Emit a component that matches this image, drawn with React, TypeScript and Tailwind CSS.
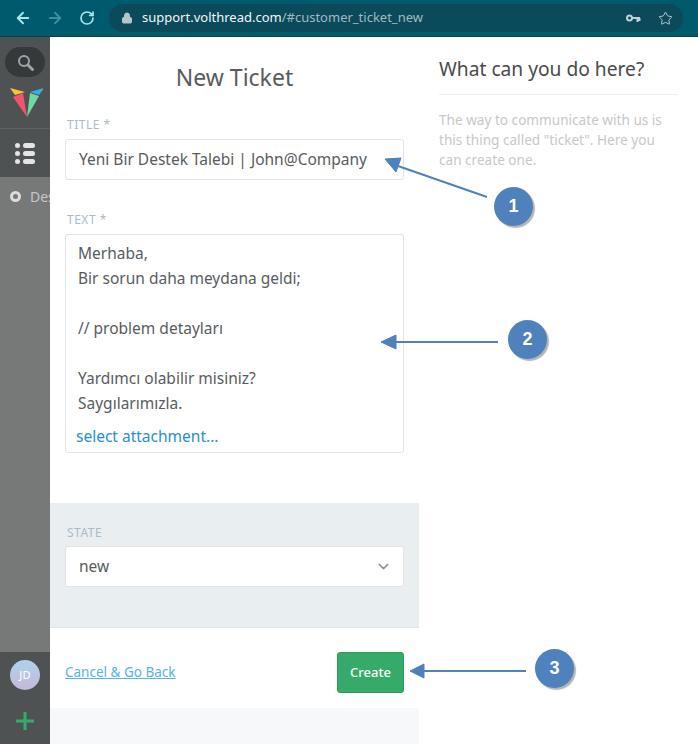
import React from 'react';
import { ArrowLeft, ArrowRight, RotateCw, Lock, Star, ChevronDown } from 'lucide-react';

const textLines = ['Merhaba,', 'Bir sorun daha meydana geldi;', '', '// problem detayları', '', 'Yardımcı olabilir misiniz?', 'Saygılarımızla.'];

const Sidebar = () => (
    <aside className="w-[50px] shrink-0 flex flex-col bg-[#4f5253]">
        <div className="h-[92px] flex flex-col items-center border-b border-[#5f6262]">
            <div className="mt-[10px] w-10 h-[30px] rounded-full bg-[#35393b] flex items-center justify-center">
                <svg width="17" height="17" viewBox="0 0 17 17" fill="none" stroke="#a0a3a4">
                    <circle cx="7" cy="7" r="5" strokeWidth="2" />
                    <path d="M11 11 L15.5 15.5" strokeWidth="3" strokeLinecap="round" />
                </svg>
            </div>
            <svg width="36" height="32" viewBox="0 0 36 32" className="mt-[10px]">
                <path d="M3 1 L18 5 L8 8 Z" fill="#f9c23c" />
                <path d="M37 1 L23 5 L32 8 Z" fill="#36b0e3" />
                <path d="M6 10 L16 6 L20 30 Z" fill="#f4536f" />
                <path d="M32 9 L23 6 L20 30 Z" fill="#6fd8a4" />
            </svg>
        </div>
        <div className="h-[48px] flex flex-col justify-center items-center gap-[3px]">
            {[0, 1, 2].map(i => (
                <div key={i} className="flex items-center gap-[3px]">
                    <span className="w-[5px] h-[5px] rounded-full bg-[#e4e4e4]" />
                    <span className="w-[12px] h-[5px] rounded-full bg-[#e4e4e4]" />
                </div>
            ))}
        </div>
        <div className="flex-1 bg-[#777878] overflow-hidden">
            <div className="flex items-center h-[38px] pl-[10px] gap-[9px] text-[#c6c7c7] text-[14px] whitespace-nowrap">
                <span className="w-[11px] h-[11px] shrink-0 rounded-full border-[3px] border-[#dcdcdc]" />
                Destek
            </div>
        </div>
        <div className="h-[92px] flex flex-col items-center">
            <div className="mt-2 w-[30px] h-[30px] rounded-full bg-gradient-to-b from-[#aed2ea] to-[#c4b9d8] flex items-center justify-center text-white text-[11px] tracking-wide">
                JD
            </div>
            <svg width="18" height="18" viewBox="0 0 18 18" className="mt-[22px]">
                <path d="M9 0 V18 M0 9 H18" stroke="#35ad68" strokeWidth="3" />
            </svg>
        </div>
    </aside>
);

const Field = ({ label, gap = 'mb-[6px]', children }: { label: string; gap?: string; children: React.ReactNode }) => (
    <div>
        <div className={`text-[12px] leading-[16px] tracking-[0.5px] pl-[2px] text-[#a9bcc8] ${gap}`}>{label}</div>
        {children}
    </div>
);

const Callout = ({ n, className }: { n: number; className: string }) => (
    <div className={`absolute w-[39px] h-[39px] rounded-full bg-[#4f81bd] text-white font-bold text-[18px] flex items-center justify-center shadow-[2px_2px_1px_#b5b5b5] font-['Liberation_Sans',sans-serif] ${className}`}>
        {n}
    </div>
);

export default function App() {
    return (
        <div className="relative w-[698px] h-[744px] overflow-hidden bg-white font-['Noto_Sans',sans-serif] text-[#585c5e]">
            <header className="h-[37px] bg-[#005a6e] border-b border-[#0b3f4d] flex items-center pl-[14px] pr-[15px]">
                <ArrowLeft size={18} strokeWidth={2.5} className="text-[#a6e8ea]" />
                <ArrowRight size={18} strokeWidth={2.5} className="text-[#3c8f9c] ml-[14px]" />
                <RotateCw size={16} strokeWidth={2.5} className="text-[#a6e8ea] ml-[15px]" />
                <div className="ml-[14px] flex-1 h-[28px] rounded-full bg-[#0b4a5a] flex items-center pl-[12px] pr-[10px]">
                    <Lock size={12} className="text-[#b4c6cb]" fill="#b4c6cb" />
                    <span className="ml-[9px] text-[13px] text-[#f2f7f8]">support.volthread.com<span className="text-[#9fbac1]">/#customer_ticket_new</span></span>
                    <div className="flex-1" />
                    <svg width="15" height="9" viewBox="0 0 15 9" fill="none" stroke="#c2d0d4">
                        <circle cx="3.5" cy="4" r="2.5" strokeWidth="2" />
                        <path d="M6 4 H14 M11.5 4 V8 M13.5 4 V7" strokeWidth="2" />
                    </svg>
                    <Star size={15} strokeWidth={1.5} className="text-[#c2d0d4] ml-[17px]" />
                </div>
            </header>

            <div className="flex h-[707px]">
                <Sidebar />
                <main className="w-[369px] shrink-0 flex flex-col">
                    <div className="h-[466px] px-[15px]">
                        <h1 className="mt-[24px] mb-[24px] text-[23px] leading-[32px] text-center">New Ticket</h1>
                        <Field label="TITLE *">
                            <div className="h-[41px] rounded-[3px] border border-[#e3e3e3] px-[13px] flex items-center text-[15.5px] whitespace-nowrap">
                                Yeni Bir Destek Talebi | John@Company
                            </div>
                        </Field>
                        <div className="h-[32px]" />
                        <Field label="TEXT *">
                            <div className="h-[219px] rounded-[3px] border border-[#e3e3e3] pl-[12px] pr-[10px] pt-[6px] text-[15.5px] leading-[25px] flex flex-col">
                                {textLines.map((line, i) => (
                                    <div key={i} className="h-[25px]">{line}</div>
                                ))}
                                <div className="mt-[8px] -ml-[2px] text-[#2a8fd0]">select attachment...</div>
                            </div>
                        </Field>
                    </div>
                    <div className="h-[125px] bg-[#e9eef1] px-[15px] pt-[22px] border-b border-[#dfe4e6]">
                        <Field label="STATE" gap="mb-[5px]">
                            <div className="h-[41px] bg-white rounded-[3px] border border-[#e3e3e3] px-[13px] flex items-center justify-between text-[15.5px]">
                                new
                                <ChevronDown size={17} className="text-[#8a9398] -mr-[2px]" />
                            </div>
                        </Field>
                    </div>
                    <div className="h-[80px] px-[15px] pt-[9px] flex items-center justify-between">
                        <a className="text-[13.5px] text-[#52b4e8] underline">Cancel &amp; Go Back</a>
                        <button className="w-[67px] h-[41px] rounded-[3px] bg-[#36ab69] border border-[#2f9a5d] text-white text-[13px] font-medium">Create</button>
                    </div>
                    <div className="flex-1 bg-[#f7f8fa]" />
                </main>
                <section className="ml-[20px] w-[239px]">
                    <h2 className="mt-[19px] text-[19.2px] leading-[26px] text-[#4a4a4a] pb-[12px] border-b border-[#eeeeee]">What can you do here?</h2>
                    <p className="mt-[15px] text-[13.6px] leading-[20px] text-[#c8c8c8]">The way to communicate with us is this thing called "ticket". Here you can create one.</p>
                </section>
            </div>

            <svg width="698" height="744" className="absolute inset-0 pointer-events-none">
                <g fill="#4f81bd" stroke="#4f81bd">
                    <path d="M487 197 L398 166" strokeWidth="2" />
                    <path d="M385 159 L401 158 L396 172 Z" strokeWidth="1" />
                    <path d="M498 342 L394 342" strokeWidth="2" />
                    <path d="M381 342 L396 335 L396 349 Z" strokeWidth="1" />
                    <path d="M526 671 L422 671" strokeWidth="2" />
                    <path d="M410 671 L424 664 L424 678 Z" strokeWidth="1" />
                </g>
            </svg>
            <Callout n={1} className="left-[494px] top-[187px]" />
            <Callout n={2} className="left-[508px] top-[320px]" />
            <Callout n={3} className="left-[535px] top-[649px]" />
        </div>
    );
}
